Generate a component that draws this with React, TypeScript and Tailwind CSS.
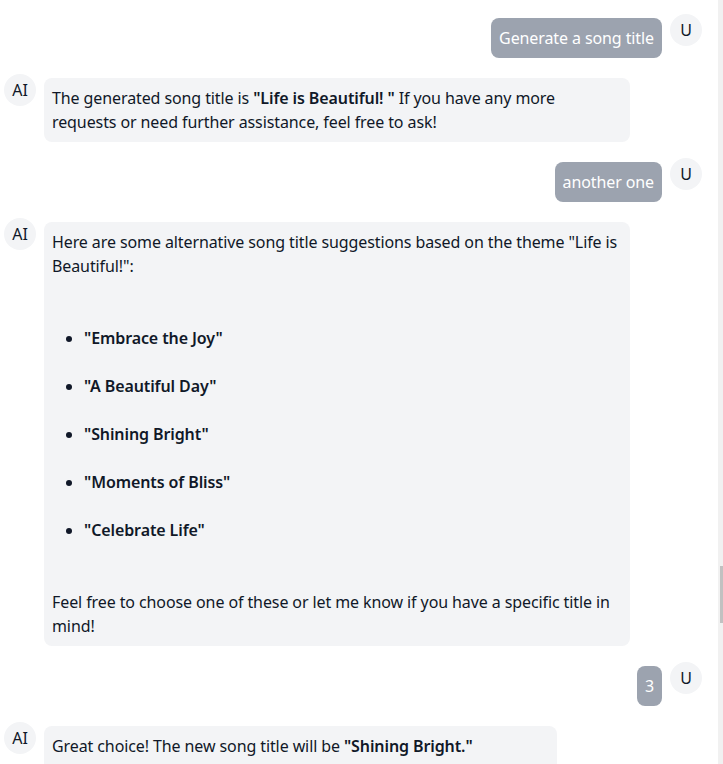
import React from 'react';

interface Msg {
  role: 'user' | 'ai';
  content: React.ReactNode;
  width?: string;
}

const Avatar: React.FC<{ label: string }> = ({ label }) => (
  <div className="flex h-8 w-8 shrink-0 items-center justify-center rounded-full bg-gray-100 text-base text-gray-900">
    {label}
  </div>
);

const messages: Msg[] = [
  { role: 'user', content: 'Generate a song title' },
  {
    role: 'ai',
    content: (
      <p>
        The generated song title is <strong className="font-semibold">"Life is Beautiful! "</strong> If you have any more
        requests or need further assistance, feel free to ask!
      </p>
    ),
  },
  { role: 'user', content: 'another one' },
  {
    role: 'ai',
    content: (
      <>
        <p>Here are some alternative song title suggestions based on the theme "Life is Beautiful!":</p>
        <ul className="my-12 list-disc space-y-6 pl-8 font-semibold">
          <li>"Embrace the Joy"</li>
          <li>"A Beautiful Day"</li>
          <li>"Shining Bright"</li>
          <li>"Moments of Bliss"</li>
          <li>"Celebrate Life"</li>
        </ul>
        <p>Feel free to choose one of these or let me know if you have a specific title in mind!</p>
      </>
    ),
  },
  { role: 'user', content: '3' },
  {
    role: 'ai',
    width: 'w-[513px] pb-10',
    content: (
      <p>
        Great choice! The new song title will be <strong className="font-semibold">"Shining Bright."</strong>
      </p>
    ),
  },
];

export default function App() {
  return (
    <div className="flex h-[764px] w-full overflow-hidden bg-white font-['Noto_Sans',sans-serif] text-base leading-6 tracking-[-0.1px] text-gray-900">
      {/* chat column */}
      <div className="flex flex-1 flex-col gap-4 pl-1 pr-4 pt-[14px]">
        {messages.map((m, i) =>
          m.role === 'user' ? (
            <div key={i} className="flex items-start justify-end gap-2">
              <div className="mt-1 rounded-lg bg-[#9ca3af] p-2 text-white">{m.content}</div>
              <Avatar label="U" />
            </div>
          ) : (
            <div key={i} className="flex items-start gap-2">
              <Avatar label="AI" />
              <div className={`mt-1 max-w-[586px] rounded-lg bg-gray-100 p-2 ${m.width ?? ''}`}>{m.content}</div>
            </div>
          )
        )}
      </div>

      {/* scrollbar */}
      <div className="flex w-[5px] justify-end bg-[#f1f1f1]">
        <div className="mt-[566px] h-[57px] w-[3px] bg-[#c1c1c1]" />
      </div>
    </div>
  );
}
